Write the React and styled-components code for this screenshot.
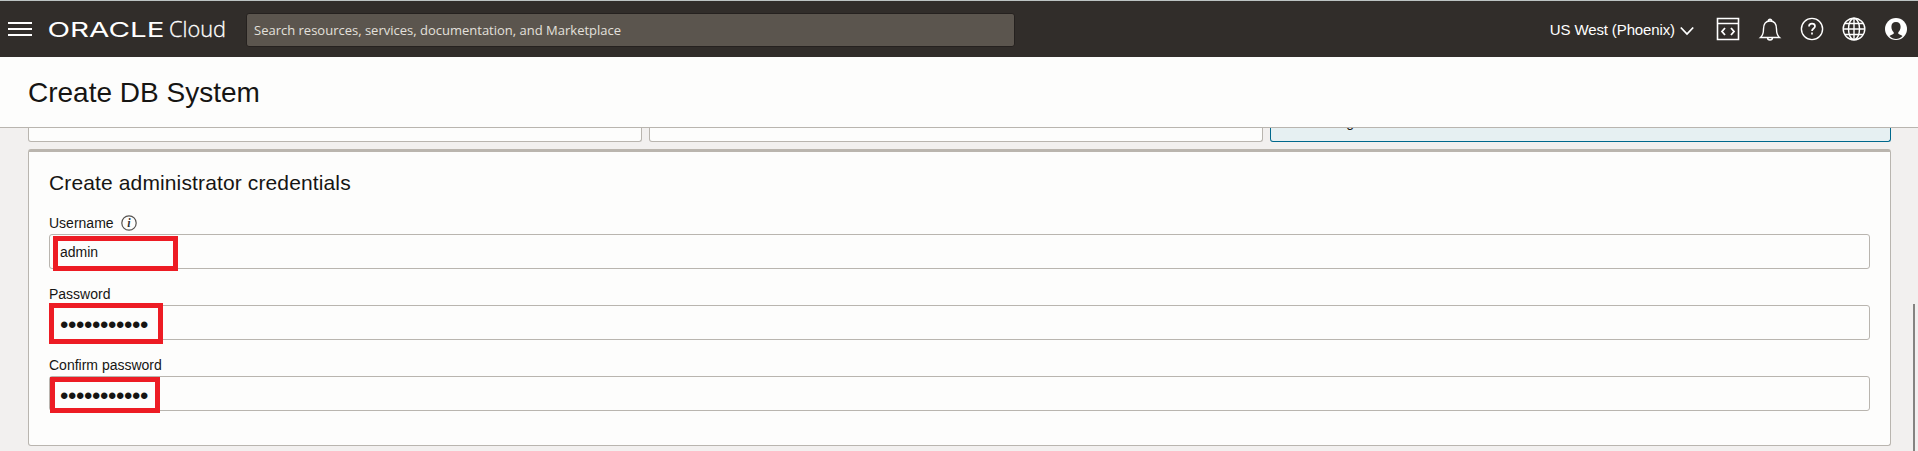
import React from "react";
import styled, { createGlobalStyle } from "styled-components";

const Global = createGlobalStyle`
  * { box-sizing: border-box; }
  body { margin: 0; background: #f2f0ef; overflow: hidden; font-family: "Liberation Sans", Arial, sans-serif; color: #161513; }
`;

const Page = styled.div`
  height: 451px;
  display: flex;
  flex-direction: column;
  overflow: hidden;
  position: relative;
`;
const TopBar = styled.header`
  height: 57px;
  flex: none;
  display: flex;
  align-items: center;
  border-top: 1px solid #bcc3c3;
  background: #312d2a;
  color: #fff;
  padding: 0 10px 0 8px;
`;
const MenuButton = styled.div`
  width: 24px;
  height: 14px;
  display: flex;
  flex-direction: column;
  justify-content: space-between;
`;
const MenuLine = styled.span`
  height: 2px;
  background: #fff;
`;
const Logo = styled.svg`
  width: 184px;
  height: 30px;
  margin-left: 15px;
  flex: none;
`;
const Search = styled.div`
  width: 769px;
  height: 34px;
  margin: 2px 0 0 15px;
  padding: 0 7px;
  border: 1px solid #25211f;
  border-radius: 3px;
  background: #5b554e;
  color: #e3e0dc;
  font: 13px/33px "Open Sans", sans-serif;
  white-space: nowrap;
`;
const Region = styled.div`
  margin-left: auto;
  display: flex;
  align-items: center;
  gap: 5px;
  font-size: 15px;
  letter-spacing: -0.12px;
  white-space: nowrap;
`;
const Actions = styled.nav`
  display: flex;
  gap: 18px;
  margin: 0 0 0 22px;
`;
const Icon = styled.svg`
  width: 24px;
  height: 24px;
  fill: none;
  stroke: #fff;
  stroke-width: 1.4;
`;
const Chevron = styled.svg`
  width: 14px;
  height: 10px;
  margin-top: 3px;
  fill: none;
  stroke: #fff;
  stroke-width: 1.8;
`;
const TitleBar = styled.div`
  height: 71px;
  flex: none;
  background: #fdfdfc;
  border-bottom: 1px solid #b9b5af;
  padding: 0 28px;
`;
const Title = styled.h1`
  margin: 0;
  font-size: 28px;
  font-weight: 400;
  line-height: 71px;
`;
const Content = styled.main`
  display: flex;
  flex-direction: column;
  padding: 0 27px 0 28px;
`;
const Options = styled.div`
  display: grid;
  grid-template-columns: 614px 614px 621px;
  gap: 7px;
  height: 14px;
`;
const Option = styled.div`
  height: 14px;
  overflow: hidden;
  border: 1px solid ${(p) => (p.$selected ? "#00688c" : "#b9b5af")};
  border-top: 0;
  border-radius: 0 0 3px 3px;
  background: ${(p) => (p.$selected ? "#e6f0f2" : "#fdfdfc")};
`;
const OptionText = styled.div`
  font-size: 14px;
  line-height: 16px;
  margin: -14px 0 0 13px;
`;
const Panel = styled.section`
  height: 297px;
  width: 1863px;
  margin-top: 7px;
  padding: 18px 20px 0;
  border: 1px solid #b9b5af;
  border-top: 3px solid #bab5ae;
  border-radius: 3px;
  background: #fdfdfc;
`;
const Heading = styled.h2`
  margin: 0 0 15px;
  font-size: 21px;
  font-weight: 400;
  letter-spacing: 0.13px;
  line-height: 26px;
`;
const Field = styled.div`
  height: 71px;
`;
const Label = styled.label`
  display: flex;
  align-items: center;
  gap: 7px;
  height: 23px;
  font-size: 14px;
`;
const Input = styled.div`
  position: relative;
  height: 35px;
  padding: 0 10px;
  border: 1px solid #b9b5af;
  border-radius: 3px;
  font-size: 14px;
  line-height: 34px;
`;
const Dots = styled.span`
  display: block;
  padding-top: 2px;
  font-size: 24px;
  letter-spacing: -0.4px;
`;
const Highlight = styled.div`
  position: absolute;
  left: ${(p) => p.$x}px;
  top: ${(p) => p.$y}px;
  width: ${(p) => p.$w}px;
  height: ${(p) => p.$h}px;
  border: 5px solid #ed1c24;
`;
const Info = styled.svg`
  width: 16px;
  height: 16px;
`;
const ScrollThumb = styled.div`
  position: absolute;
  left: 1913px;
  top: 304px;
  width: 2px;
  height: 147px;
  background: #858381;
`;

const secret = "•".repeat(11);

function CredentialField({ label, info, box, children }) {
  return (
    <Field>
      <Label>
        {label}
        {info && (
          <Info viewBox="0 0 16 16">
            <circle cx="8" cy="8" r="7.2" fill="none" stroke="#55524f" strokeWidth="1.2" />
            <text x="8" y="12" textAnchor="middle" fontFamily="Liberation Serif, serif" fontStyle="italic" fontWeight="700" fontSize="12" fill="#333">i</text>
          </Info>
        )}
      </Label>
      <Input>
        {children}
        <Highlight {...box} />
      </Input>
    </Field>
  );
}

export default function App() {
  return (
    <Page>
      <Global />
      <TopBar>
        <MenuButton><MenuLine /><MenuLine /><MenuLine /></MenuButton>
        <Logo viewBox="0 0 184 30" fill="#fff">
          <text x="0.500" y="22.500" textLength="117" lengthAdjust="spacingAndGlyphs" fontFamily="Inter, sans-serif" fontWeight="400" fontSize="20">ORACLE</text>
          <text x="122" y="22.500" textLength="57" lengthAdjust="spacingAndGlyphs" fontFamily="Open Sans, sans-serif" fontWeight="300" fontSize="22" stroke="#fff" strokeWidth="0.300">Cloud</text>
        </Logo>
        <Search>Search resources, services, documentation, and Marketplace</Search>
        <Region>
          US West (Phoenix)
          <Chevron viewBox="0 0 14 10"><path d="M.8 1.5 7 8l6.200-6.500" /></Chevron>
        </Region>
        <Actions>
          <Icon viewBox="0 0 24 24"><path d="M1.500 1.500h21v21h-21zM1.500 6.500h21" strokeWidth="1.600" /><path d="m9 11-3 3.500L9 18M15 11l3 3.500-3 3.500" strokeWidth="1.800" /></Icon>
          <Icon viewBox="0 0 24 24"><path d="M2.500 20.500h19c-3-2.500-3-5-3-8.500 0-5-2-8-6.500-8s-6.500 3-6.500 8c0 3.500 0 6-3 8.500zM10.200 4a1.800 1.800 0 1 1 3.600 0M9.500 20.500a2.500 2.500 0 0 0 5 0" /></Icon>
          <Icon viewBox="0 0 24 24"><circle cx="12" cy="12" r="10.600" /><path d="M9 9.500C9 7.600 10.200 6.700 12 6.700s3 1 3 2.600c0 2.200-3 2.300-3 4.700M12 15.500v2" strokeWidth="1.700" /></Icon>
          <Icon viewBox="0 0 24 24"><circle cx="12" cy="12" r="10.800" /><ellipse cx="12" cy="12" rx="5.500" ry="10.800" /><path d="M12 1.200v21.600M1.200 12h21.600M3 6.500h18M3 17.500h18" /></Icon>
          <Icon viewBox="0 0 24 24"><circle cx="12" cy="12" r="11" fill="#fff" stroke="none" /><path d="M12 5c-3 0-4.600 2-4.600 4.800 0 2.400 1 4.200 2.300 5.400v1.600c-1 .9-2.700 1.300-4.200 2.200 3.500 4 9.500 4 13 0-1.500-.9-3.200-1.300-4.200-2.200v-1.600c1.300-1.200 2.300-3 2.300-5.400C16.600 7 15 5 12 5z" fill="#312d2a" stroke="none" /></Icon>
        </Actions>
      </TopBar>
      <TitleBar><Title>Create DB System</Title></TitleBar>
      <Content>
        <Options>
          <Option />
          <Option />
          <Option $selected><OptionText>data storage</OptionText></Option>
        </Options>
        <Panel>
          <Heading>Create administrator credentials</Heading>
          <CredentialField label="Username" info box={{ $x: 3, $y: 1, $w: 125, $h: 35 }}>admin</CredentialField>
          <CredentialField label="Password" box={{ $x: -1, $y: -3, $w: 114, $h: 41 }}><Dots>{secret}</Dots></CredentialField>
          <CredentialField label="Confirm password" box={{ $x: 0, $y: 0, $w: 110, $h: 36 }}><Dots>{secret}</Dots></CredentialField>
        </Panel>
      </Content>
      <ScrollThumb />
    </Page>
  );
}
